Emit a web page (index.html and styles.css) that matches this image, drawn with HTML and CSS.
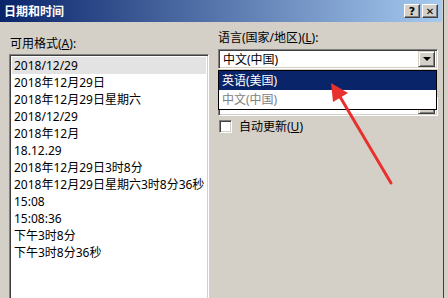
FILE: index.html
```html
<!DOCTYPE html>
<html lang="zh-CN">

<head>
    <meta charset="UTF-8">
    <meta name="viewport" content="width=device-width, initial-scale=1.0">
    <title>日期和时间</title>
    <link rel="stylesheet" href="styles.css">
</head>

<body>
    <div class="window">
        <!-- Title bar -->
        <div class="titlebar">
            <span class="title">日期和时间</span>
            <div class="title-buttons">
                <span class="tbtn">?</span>
                <span class="tbtn tbtn-close">✕</span>
            </div>
        </div>

        <div class="content">
            <!-- Formats list -->
            <div class="col-left">
                <div class="label">可用格式(<u>A</u>):</div>
                <div class="listbox">
                    <div class="row selected">2018/12/29</div>
                    <div class="row">2018年12月29日</div>
                    <div class="row">2018年12月29日星期六</div>
                    <div class="row">2018/12/29</div>
                    <div class="row">2018年12月</div>
                    <div class="row">18.12.29</div>
                    <div class="row">2018年12月29日3时8分</div>
                    <div class="row">2018年12月29日星期六3时8分36秒</div>
                    <div class="row">15:08</div>
                    <div class="row">15:08:36</div>
                    <div class="row">下午3时8分</div>
                    <div class="row">下午3时8分36秒</div>
                </div>
            </div>

            <!-- Language side -->
            <div class="col-right">
                <div class="label">语言(国家/地区)(<u>L</u>):</div>
                <div class="combo-wrap">
                    <div class="combo">
                        <span class="combo-text">中文(中国)</span>
                        <span class="combo-btn"><span class="tri"></span></span>
                    </div>
                    <div class="combo combo-behind">
                        <span class="combo-text"></span>
                        <span class="combo-btn"></span>
                    </div>
                    <!-- open drop-down list -->
                    <div class="dropdown">
                        <div class="opt active">英语(美国)</div>
                        <div class="opt">中文(中国)</div>
                    </div>
                </div>
                <label class="check-row">
                    <span class="checkbox"></span>
                    <span>自动更新(<u>U</u>)</span>
                </label>
            </div>
        </div>

        <!-- red pointer arrow -->
        <svg class="pointer" width="448" height="298" viewBox="0 0 448 298">
            <line x1="391" y1="183" x2="336" y2="90" stroke="#e8312f" stroke-width="3" stroke-linecap="round" />
            <polygon points="331,83 348,93 333,102" fill="#e8312f" />
        </svg>
    </div>
</body>

</html>
```

FILE: styles.css
```css
/* Classic dialog look */
body {
    margin: 0;
    font-family: "Noto Sans", "Noto Sans CJK SC", sans-serif;
    font-size: 12px;
    color: #000;
}

.window {
    position: relative;
    width: 444px;
    height: 298px;
    background: #d4d0c8;
    border-right: 4px solid #d4d0c8;
    box-shadow: inset -1px 0 #404040;
    overflow: hidden;
}

.titlebar {
    height: 22px;
    display: flex;
    align-items: center;
    justify-content: space-between;
    padding: 0 4px 0 4px;
    margin-right: 2px;
    background: linear-gradient(to right, #0a246a, #a6caf0);
    color: #fff;
}

.title {
    font-weight: bold;
    font-size: 12px;
}

.title-buttons {
    display: flex;
    gap: 2px;
}

.tbtn {
    width: 16px;
    height: 14px;
    box-sizing: border-box;
    background: #d4d0c8;
    color: #000;
    font-family: "DejaVu Sans", sans-serif;
    font-weight: bold;
    font-size: 11px;
    line-height: 13px;
    text-align: center;
    border: 1px solid;
    border-color: #fff #404040 #404040 #fff;
    box-shadow: inset -1px -1px #808080;
}

.tbtn-close {
    font-size: 10px;
}

.content {
    display: flex;
    padding: 0 0 0 9px;
}

.label {
    height: 15px;
    line-height: 15px;
}

.col-left {
    width: 200px;
    padding-top: 14px;
}

.col-left .label {
    padding-left: 1px;
    margin-bottom: 3px;
}

.listbox {
    height: 260px;
    background: #fff;
    border: 1px solid;
    border-color: #808080 #fff #fff #808080;
    box-shadow: inset 1px 1px #404040, inset -1px -1px #d4d0c8;
    padding: 2px 2px;
}

.row {
    height: 17px;
    line-height: 17px;
    padding-left: 2px;
    white-space: nowrap;
}

.row.selected {
    background: #e3e3e3;
}

.col-right {
    margin-left: 9px;
    width: 220px;
    padding-top: 8px;
}

.col-right .label {
    margin-bottom: 4px;
}

.combo-wrap {
    position: relative;
    height: 68px;
}

.combo {
    height: 20px;
    box-sizing: border-box;
    display: flex;
    align-items: center;
    justify-content: space-between;
    background: #fff;
    border: 1px solid;
    border-color: #808080 #fff #fff #808080;
    box-shadow: inset 1px 1px #404040, inset -1px -1px #d4d0c8;
    padding: 1px 2px 1px 4px;
}

.combo-behind {
    margin-top: 27px;
}

.combo-btn {
    width: 17px;
    height: 16px;
    box-sizing: border-box;
    display: flex;
    align-items: center;
    justify-content: center;
    background: #d4d0c8;
    border: 1px solid;
    border-color: #d4d0c8 #404040 #404040 #d4d0c8;
    box-shadow: inset 1px 1px #fff, inset -1px -1px #808080;
}

.tri {
    width: 0;
    height: 0;
    border-left: 4px solid transparent;
    border-right: 4px solid transparent;
    border-top: 4px solid #000;
}

.dropdown {
    position: absolute;
    left: 0;
    top: 21px;
    width: 219px;
    box-sizing: border-box;
    background: #fff;
    border: 1px solid #000;
}

.opt {
    height: 19px;
    line-height: 19px;
    padding-left: 3px;
    color: #808080;
}

.opt.active {
    background: #0a246a;
    color: #fff;
}

.check-row {
    display: flex;
    align-items: center;
    gap: 7px;
    padding-left: 1px;
}

.checkbox {
    width: 13px;
    height: 13px;
    box-sizing: border-box;
    background: #fff;
    border: 1px solid;
    border-color: #808080 #fff #fff #808080;
    box-shadow: inset 1px 1px #404040, inset -1px -1px #d4d0c8;
}

.pointer {
    position: absolute;
    left: 0;
    top: 0;
    pointer-events: none;
}
```
